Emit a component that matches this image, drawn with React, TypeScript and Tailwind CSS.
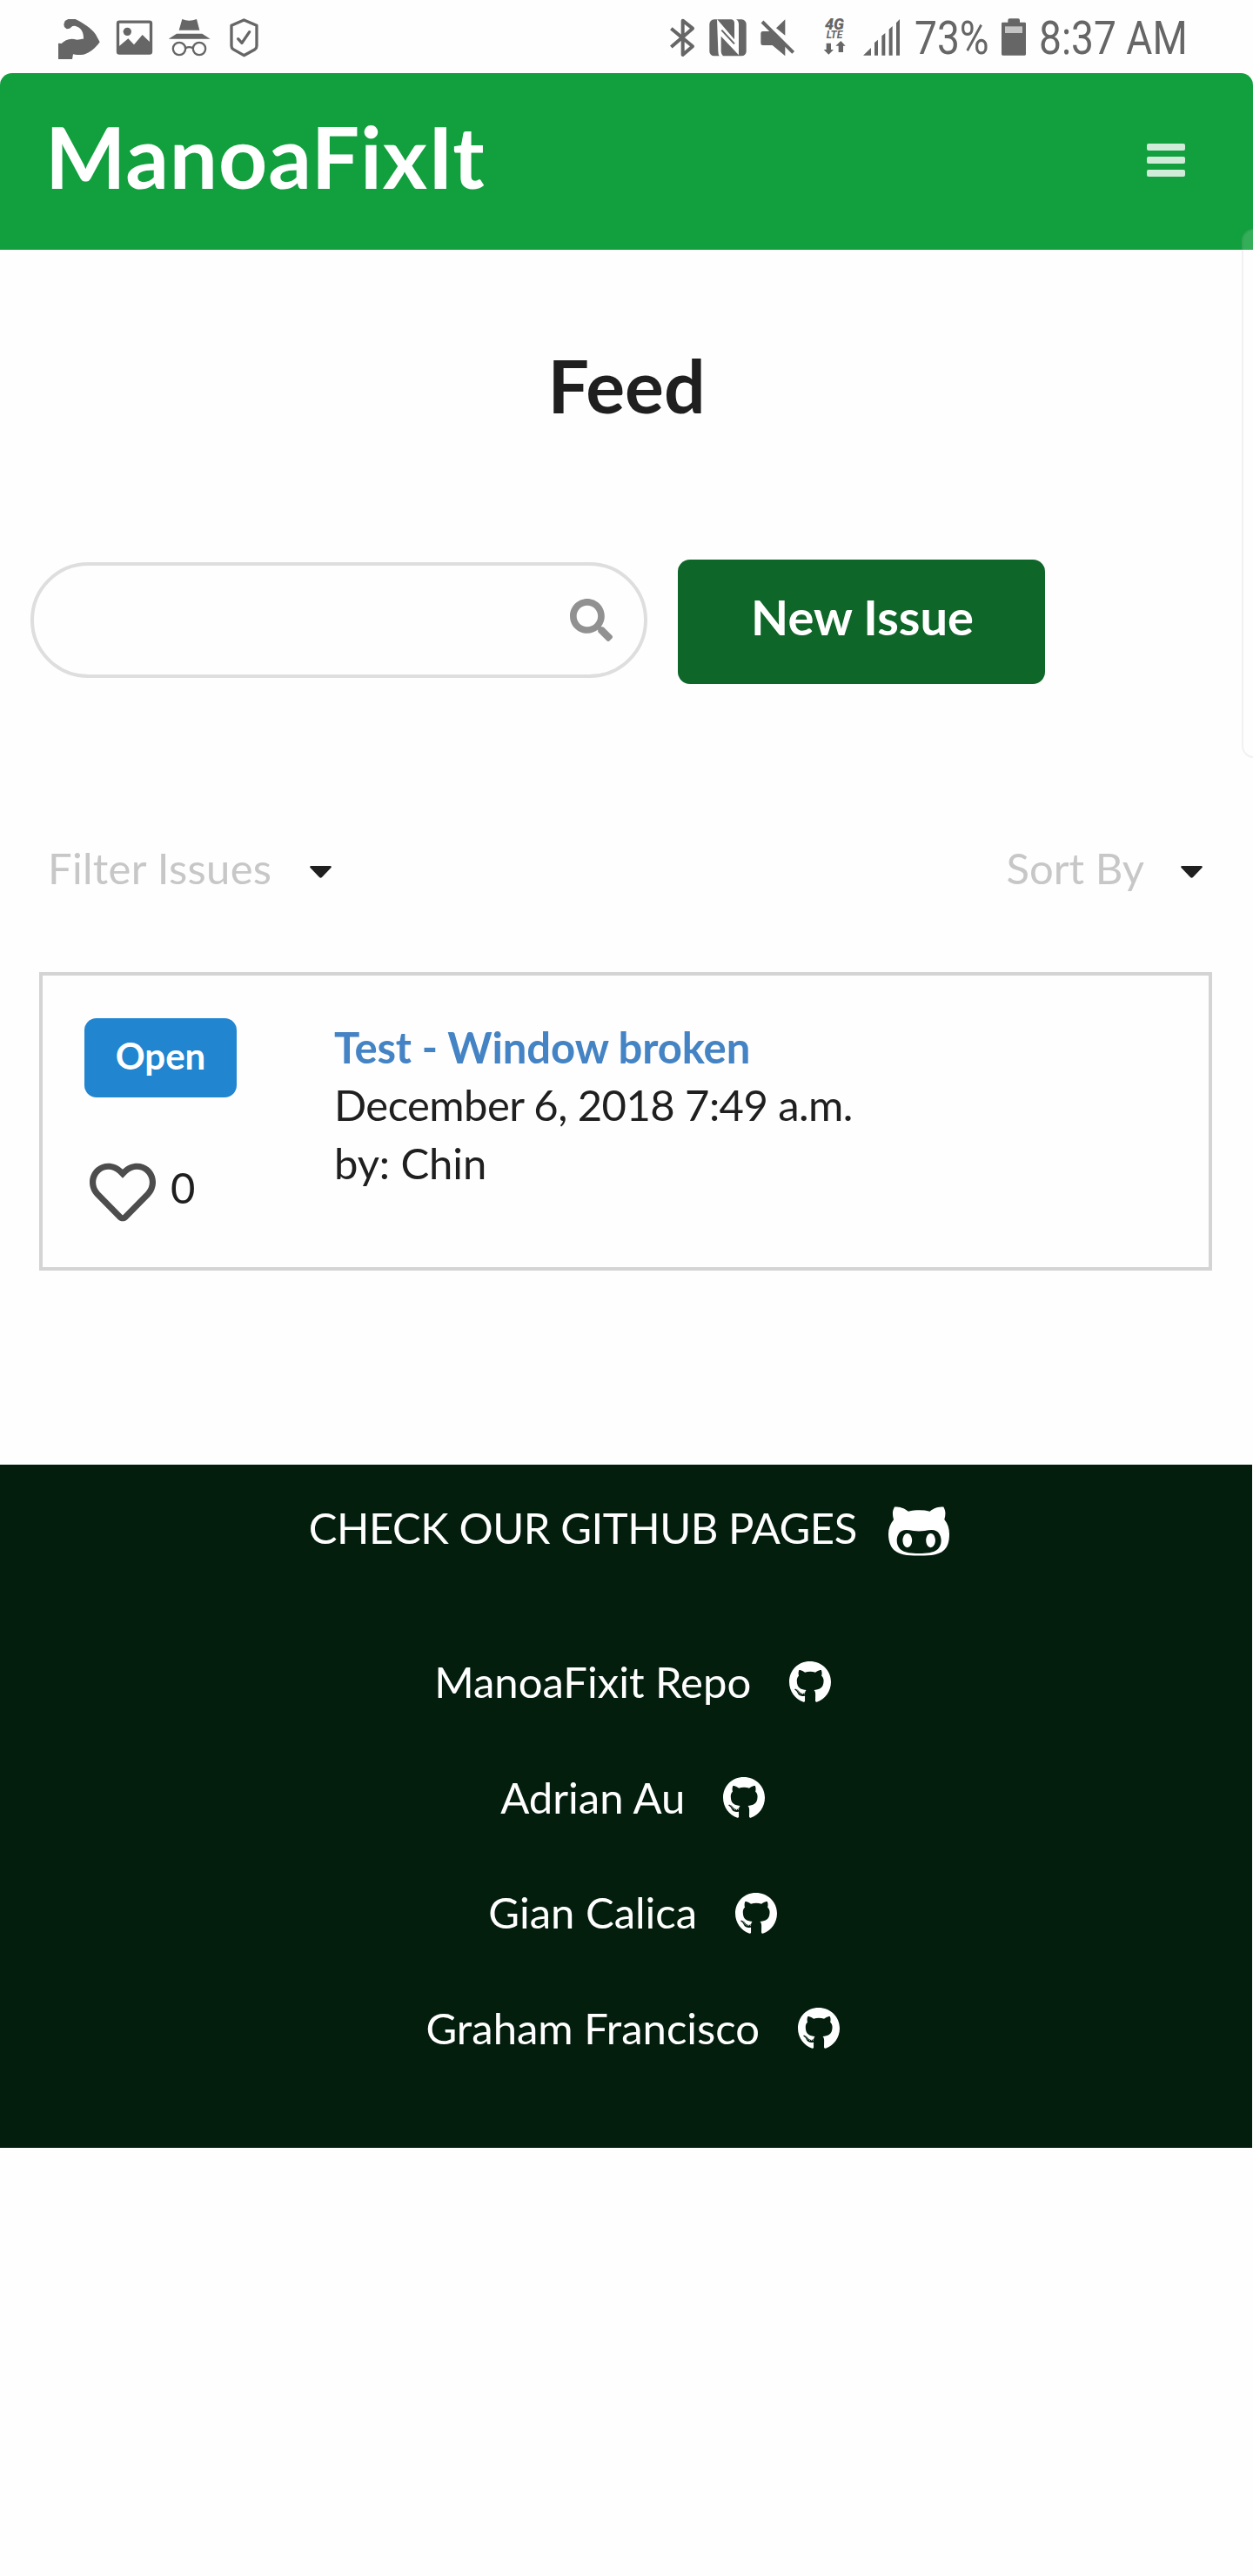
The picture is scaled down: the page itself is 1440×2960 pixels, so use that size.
import React from "react";
import { FaGithub, FaGithubAlt, FaRegHeart, FaSearch } from "react-icons/fa";

const links = ["ManoaFixit Repo", "Adrian Au", "Gian Calica", "Graham Francisco"];

function StatusBar() {
  return (
    <div className="flex h-[84px] items-start bg-[#fefefe] pl-[67px] text-[#666666]">
      <svg className="mt-5 h-[50px] w-[50px]" viewBox="81 60 150 150" fill="currentColor">
        <path d="M100 84L104 72L115 66L140 66L152 72C175 85 205 105 215 128L224 145C210 165 190 183 168 188C150 190 140 189 132 187L129 204H81V149L92 150C105 138 120 130 145 137C152 136 160 134 168 134C168 124 167 112 161 104C155 95 148 92 138 89L130 90L120 98L110 100L102 93Z" />
      </svg>
      <svg className="ml-4 mt-5 h-[50px] w-[44px]" viewBox="279 60 132 150" fill="currentColor">
        <rect x="286.500" y="75.500" width="114" height="108" rx="5" fill="none" stroke="currentColor" strokeWidth="10" />
        <circle cx="319" cy="109" r="14" />
        <path d="M290 160L322 133L342 154L371 120L398 146V184H290Z" />
      </svg>
      <svg className="ml-4 mt-5 h-[50px] w-[50px]" viewBox="459 60 150 150" fill="currentColor">
        <path d="M508 66Q532 77 558 66L568 104H497ZM489 116H577L605 134H461Z" />
        <g fill="none" stroke="currentColor" strokeWidth="7">
          <circle cx="498" cy="168" r="21.500" />
          <circle cx="567" cy="168" r="21.500" />
          <path d="M520 166Q532 159 545 166" />
        </g>
      </svg>
      <svg className="ml-5 mt-5 h-[50px] w-9" viewBox="669 60 108 150" fill="none" stroke="currentColor" strokeWidth="10" strokeLinejoin="round">
        <path d="M721 69L765 88V158Q765 166 759 170L721 191L684 170Q678 166 678 158V88Z" />
        <path d="M701 134L714 148L740 110" strokeLinecap="round" />
      </svg>
      <svg className="ml-[470px] mt-5 h-[50px] w-8" viewBox="87 60 96 150" fill="none" stroke="currentColor" strokeWidth="12" strokeLinejoin="round">
        <path d="M94 98L168 160L134 189V71L168 98L94 162" />
      </svg>
      <svg className="ml-[14px] mt-5 h-[50px] w-[44px]" viewBox="225 60 132 150">
        <rect x="226" y="67" width="127" height="126" rx="16" fill="currentColor" />
        <path d="M252 66L312 136V80Q312 70 302 66H318Q327 72 327 84V190L266 125V178Q266 188 274 194H260Q256 188 256 176Z" fill="#fefefe" />
        <path d="M268 104L312 151" stroke="currentColor" strokeWidth="6" />
      </svg>
      <svg className="ml-[14px] mt-5 h-[50px] w-[42px]" viewBox="399 60 126 150" fill="currentColor">
        <path d="M487 67V122L456 97ZM410 108H440L487 155V193L443 156H410Q403 156 403 149V115Q403 108 410 108Z" />
        <path d="M408 75L515 181" fill="none" stroke="currentColor" strokeWidth="12" />
      </svg>
      <div className="ml-[30px] mt-[20px] flex h-[46px] w-7 flex-col items-center font-['Roboto'] italic">
        <span className="text-[18px] font-black leading-[15px]">4G</span>
        <span className="text-[12px] font-bold leading-[11px]">LTE</span>
        <svg className="mt-px h-4 w-[26px]" viewBox="616 144 78 48" fill="currentColor">
          <path d="M627 152H643V174H652L635 191L618 174H627ZM669 183H685V161H693L677 144L659 161H669Z" />
        </svg>
      </div>
      <svg className="ml-[19px] mt-5 h-[50px] w-[44px]" viewBox="756 60 132 150" fill="currentColor">
        <path d="M756 191L783 165V191ZM795 147L807 137V191H795ZM820 124L832 114V191H820ZM845 101L857 90V191H845ZM870 79L882 66V191H870Z" />
      </svg>
      <div className="ml-[15px] mt-[14px] w-[99px] font-['Roboto'] text-[53px] leading-[60px]">
        <span className="inline-block origin-left scale-x-[0.87]">73%</span>
      </div>
      <svg className="mt-5 h-[50px] w-8" viewBox="330 60 96 150">
        <path d="M337 77H355V70Q355 64 361 64H390Q396 64 396 70V77H413Q417 77 417 81V187Q417 191 413 191H337Q333 191 333 187V81Q333 77 337 77Z" fill="currentColor" />
        <rect x="345" y="91" width="60" height="23" fill="#c4c4c4" />
      </svg>
      <div className="ml-3 mt-[14px] font-['Roboto'] text-[53px] leading-[60px]">
        <span className="inline-block origin-left scale-x-[0.87] whitespace-nowrap">8:37 AM</span>
      </div>
    </div>
  );
}

function Caret() {
  return (
    <svg className="mt-[9px] h-[14px] w-[25px]" viewBox="0 0 25 14" fill="#1f1f1f">
      <path d="M1.500 0H23.500Q25.500 0 24.500 2L14 13Q12.500 14.500 11 13L.5 2Q-.5 0 1.500 0Z" />
    </svg>
  );
}

export default function App() {
  return (
    <div className="relative h-[2960px] w-[1440px] overflow-hidden bg-[#fefefe] font-['Lato',sans-serif] text-[49px] text-[#1f1f1f]">
      <StatusBar />
      <nav className="flex h-[202.5px] justify-between rounded-t-[14px] bg-[#12a03e] pl-[52px] pr-[78px]">
        <h1 className="mt-[46px] text-[98px] font-bold leading-[98px] tracking-[0.9px] text-white">ManoaFixIt</h1>
        <button className="mt-[81px] flex h-[38px] w-[44px] flex-col justify-between">
          <span className="h-2 w-full rounded-[2px] bg-[#d0ecd8]" />
          <span className="h-2 w-full rounded-[2px] bg-[#d0ecd8]" />
          <span className="h-2 w-full rounded-[2px] bg-[#d0ecd8]" />
        </button>
      </nav>

      <main>
        <h2 className="mt-[114px] text-center text-[84px] font-bold leading-[84px]">Feed</h2>

        <div className="mt-[158px] flex h-[143px] items-start pl-[35px]">
          <label className="mt-[3.5px] flex h-[133px] w-[709px] items-center justify-end rounded-full border-4 border-[#dedede] pr-[36px]">
            <FaSearch className="size-[49px] text-[#919191]" />
          </label>
          <button className="ml-[35px] h-[143px] w-[422px] rounded-[14px] bg-[#0e6629] pb-[11px] pl-[2px] text-[56px] font-bold text-white">
            New Issue
          </button>
        </div>

        <div className="mt-[187px] flex h-[49px] items-center justify-between pl-[55px] pr-[58px] leading-[49px] text-[#c7c7c7]">
          <div className="flex items-center gap-[44px] tracking-[0.3px]">
            Filter Issues <Caret />
          </div>
          <div className="flex items-center gap-[42px]">
            Sort By <Caret />
          </div>
        </div>

        <article className="ml-[45px] mt-[95.5px] flex h-[343px] w-[1348px] border-4 border-[#d4d4d4] pl-12 pt-[48.5px]">
          <div className="w-[287px]">
            <div className="h-[91px] w-[175px] rounded-[14px] bg-[#2185d0] pt-[17px] text-center text-[42px] font-bold leading-[52px] text-white">
              Open
            </div>
            <div className="mt-[71px] flex items-start pl-[6px]">
              <FaRegHeart className="size-[76px] text-[#4d4d4d]" />
              <span className="ml-[17px] mt-[8px] leading-[49px]">0</span>
            </div>
          </div>
          <div className="leading-[66.5px]">
            <div className="font-bold tracking-[-0.12px] text-[#4483c4]">Test - Window broken</div>
            <div className="tracking-[-0.58px]">December 6, 2018 7:49 a.m.</div>
            <div className="tracking-[-0.1px]">by: Chin</div>
          </div>
        </article>
      </main>

      <footer className="mt-[223px] h-[785px] w-[1438.5px] bg-[#041e0d] text-white">
        <div className="flex h-[144px] items-center justify-center gap-[36px] pl-[7px] leading-[49px] tracking-[-0.45px]">
          CHECK OUR GITHUB PAGES
          <FaGithubAlt className="mt-[8px] h-[75px] w-[70px]" />
        </div>
        <ul className="pl-[16px] pt-[39px]">
          {links.map((name) => (
            <li key={name} className="flex h-[132.7px] items-center justify-center gap-[44px] leading-[49px]">
              {name}
              <FaGithub className="mt-[2px] h-[50px] w-12" />
            </li>
          ))}
        </ul>
      </footer>

      {/* Edge panel handle */}
      <div className="absolute left-[1427px] top-[263px] h-[608px] w-[30px] rounded-[14px] border-2 border-black/5 bg-white/15" />
    </div>
  );
}
